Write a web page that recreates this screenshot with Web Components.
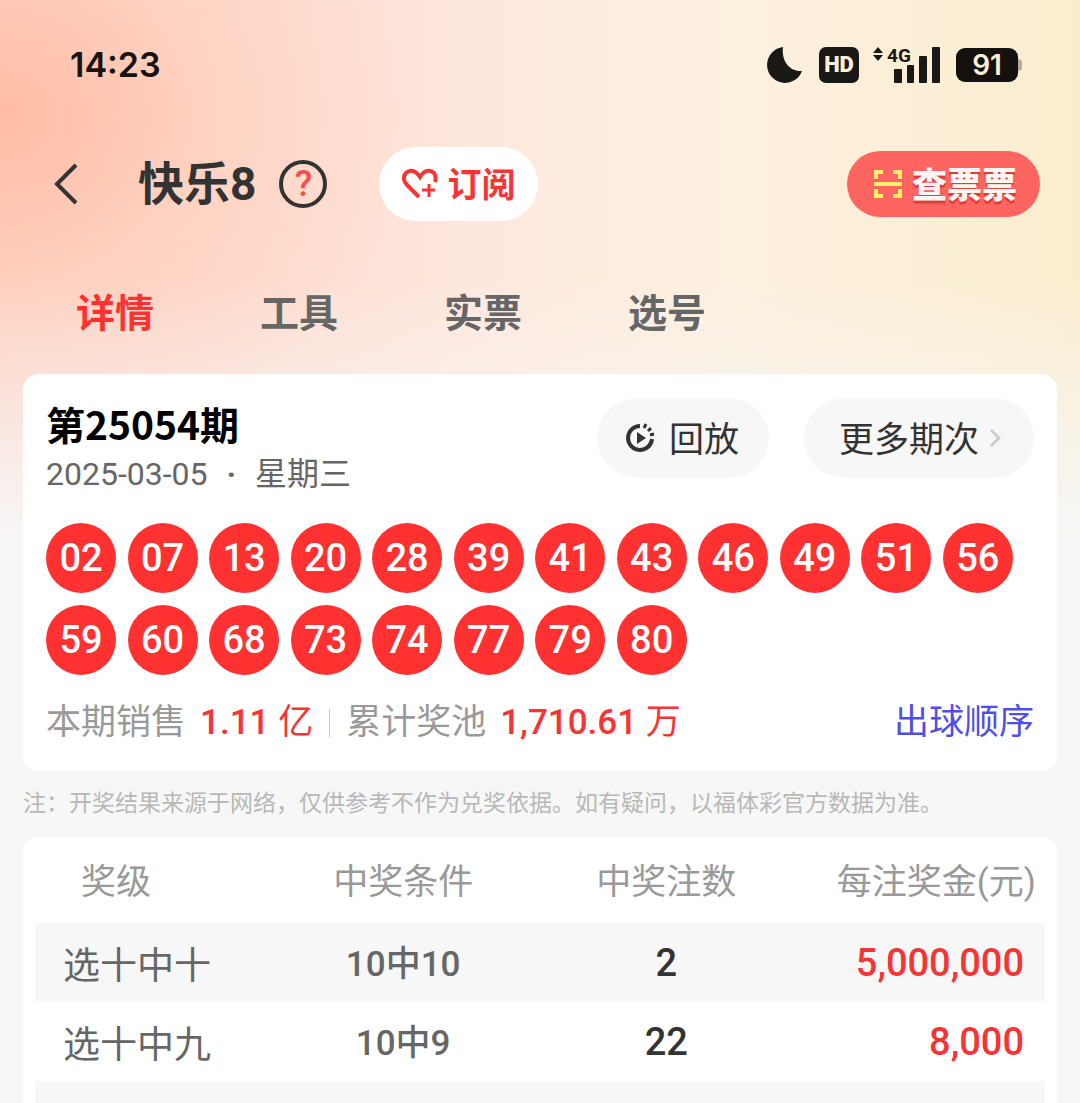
<!DOCTYPE html>
<html lang="zh-CN">
<head>
<meta charset="utf-8">
<meta name="viewport" content="width=device-width, initial-scale=1">
<title>快乐8</title>
<style>
    body {
        margin: 0;
        font-family: Roboto, "Noto Sans CJK SC", sans-serif;
        color: #333;
    }
</style>
</head>
<body>
<lottery-app></lottery-app>

<script>
class BaseElement extends HTMLElement {
    constructor() {
        super();
        this.attachShadow({ mode: 'open' });
        this.shadowRoot.innerHTML = this.render();
    }
}

class StatusBar extends BaseElement {
    render() {
        return `
            <style>
                :host {
                    display: flex;
                    justify-content: space-between;
                    align-items: center;
                    height: 130px;
                    padding: 0 58px 0 70px;
                    color: #17130f;
                }

                time {
                    font: 600 34px/40px Inter, sans-serif;
                }

                .icons {
                    display: flex;
                    align-items: center;
                }

                svg {
                    display: block;
                }

                .hd {
                    width: 40px;
                    margin: 0 13px 0 17px;
                    border-radius: 7px;
                    background: #1a1815;
                    color: #fdf0da;
                    font: 900 22px/36px Roboto, sans-serif;
                    text-align: center;
                }

                .battery {
                    width: 62px;
                    margin-left: 16px;
                    border-radius: 9px;
                    background: #14110e;
                    color: #fbefd6;
                    font: 600 28px/34px Inter, sans-serif;
                    text-align: center;
                }

                .nub {
                    width: 4px;
                    height: 12px;
                    border-radius: 0 4px 4px 0;
                    background: #b3aa9b;
                }
            </style>
            <time>14:23</time>
            <div class="icons">
                <svg width="35" height="36" viewBox="0 0 35 36" aria-hidden="true">
                    <path fill="#1a1815" d="M16 0A18 18 0 1 0 35 24C26 25 14 18 16 0z"/>
                </svg>
                <span class="hd">HD</span>
                <svg width="68" height="52" viewBox="0 -8 68 52" aria-hidden="true">
                    <g fill="#1a1815">
                        <path d="M6 0l5 6H1zM6 14l5-6H1z"/>
                        <text x="15" y="15" font-family="Roboto, sans-serif" font-weight="700" font-size="19">4G</text>
                        <rect x="22" y="22" width="8" height="14" rx="1"/>
                        <rect x="35" y="18" width="7" height="18" rx="1"/>
                        <rect x="47" y="9" width="8" height="27" rx="1"/>
                        <rect x="60" y="0" width="8" height="36" rx="1"/>
                    </g>
                </svg>
                <span class="battery">91</span>
                <i class="nub"></i>
            </div>
        `;
    }
}

class NavBar extends BaseElement {
    render() {
        return `
            <style>
                :host {
                    display: flex;
                    align-items: center;
                    height: 108px;
                    padding: 0 40px 0 54px;
                }

                button {
                    display: flex;
                    align-items: center;
                    justify-content: center;
                    padding: 0;
                    border: none;
                    background: none;
                    font-family: inherit;
                    cursor: pointer;
                }

                button span {
                    padding-bottom: 3px;
                }

                svg {
                    display: block;
                }

                h1 {
                    margin: 0 23px 0 60px;
                    font-size: 46px;
                    font-weight: 700;
                    line-height: 56px;
                }

                .help {
                    box-sizing: border-box;
                    width: 48px;
                    height: 48px;
                    border: 4px solid #333;
                    border-radius: 50%;
                    color: #f55050;
                    font-size: 36px;
                    font-weight: 500;
                    line-height: 40px;
                }

                .subscribe {
                    gap: 9px;
                    height: 74px;
                    margin: 0 auto 0 52px;
                    padding: 0 23px;
                    border-radius: 37px;
                    background: #fff;
                    color: #f93434;
                    font-size: 34px;
                    font-weight: 700;
                }

                .check {
                    gap: 10px;
                    height: 66px;
                    padding: 0 23px 0 27px;
                    border-radius: 33px;
                    background: #ff6560;
                    color: #fff5f3;
                    font-size: 35px;
                    font-weight: 900;
                    text-shadow: 0 3px 1px #dd3c38;
                }
            </style>
            <button aria-label="返回">
                <svg width="24" height="42" viewBox="0 0 24 42"><path d="M22 2L3 21l19 19" fill="none" stroke="#333" stroke-width="4"/></svg>
            </button>
            <h1>快乐8</h1>
            <button class="help">?</button>
            <button class="subscribe">
                <svg width="36" height="32" viewBox="0 0 36 32" fill="none" stroke="#f93434" stroke-width="4">
                    <path d="M17 29L5 17C1 13 1 8 4 5C8 1 13 2 18 9C22 2 28 1 32 5C34 8 34 11 33 14"/>
                    <path d="M27 16v13M20 22h13" stroke-width="3"/>
                </svg>
                <span>订阅</span>
            </button>
            <button class="check">
                <svg width="28" height="28" viewBox="0 0 28 28" fill="none" stroke="#ffef6b" stroke-width="4">
                    <path d="M2 9V2h7M19 2h7v7M26 19v7h-7M9 26H2v-7M0 14h28"/>
                </svg>
                <span>查票票</span>
            </button>
        `;
    }
}

class TabStrip extends BaseElement {
    render() {
        return `
            <style>
                :host {
                    display: block;
                }

                nav {
                    display: flex;
                    gap: 106px;
                    padding: 49px 76px 33px;
                }

                a {
                    color: #666;
                    font-size: 39px;
                    font-weight: 700;
                    line-height: 54px;
                    text-decoration: none;
                }

                a[aria-current] {
                    color: #ff3131;
                }
            </style>
            <nav>
                <a href="#detail" aria-current="page">详情</a>
                <a href="#tools">工具</a>
                <a href="#tickets">实票</a>
                <a href="#pick">选号</a>
            </nav>
        `;
    }
}

class PillButton extends BaseElement {
    render() {
        return `
            <style>
                :host {
                    display: block;
                }

                button {
                    display: flex;
                    align-items: center;
                    gap: var(--pill-gap, 10px);
                    height: 80px;
                    padding: 0 var(--pill-right, 30px) 0 var(--pill-left, 30px);
                    border: none;
                    border-radius: 40px;
                    background: #f7f7f7;
                    color: #333;
                    font-family: inherit;
                    font-size: 35px;
                    cursor: pointer;
                }

                ::slotted(span) {
                    padding-bottom: 3px;
                }
            </style>
            <button><slot></slot></button>
        `;
    }
}

class NumberBall extends BaseElement {
    render() {
        return `
            <style>
                :host {
                    display: block;
                    height: 70px;
                    border-radius: 50%;
                    background: #ff3131;
                    color: #fff;
                    font-size: 38px;
                    font-weight: 500;
                    line-height: 70px;
                    text-align: center;
                }
            </style>
            <slot></slot>
        `;
    }
}

class DrawCard extends BaseElement {
    render() {
        const numbers = ['02', '07', '13', '20', '28', '39', '41', '43', '46', '49',
            '51', '56', '59', '60', '68', '73', '74', '77', '79', '80'];
        return `
            <style>
                :host {
                    display: block;
                    padding: 24px 23px;
                    border-radius: 16px;
                    background: #fff;
                }

                header {
                    display: flex;
                    gap: 35px;
                    margin-bottom: 29px;
                }

                .issue {
                    flex: 1;
                }

                h2 {
                    margin: 0 0 6px;
                    color: #000;
                    font: 700 39px/50px "Noto Sans CJK SC", sans-serif;
                }

                .date {
                    color: #666;
                    font-size: 32px;
                    line-height: 40px;
                }

                .date i {
                    margin: 0 11px;
                    font-style: normal;
                    font-weight: 700;
                }

                .replay {
                    --pill-gap: 14px;
                    --pill-left: 29px;
                }

                .more {
                    --pill-left: 35px;
                    --pill-right: 33px;
                }

                svg {
                    display: block;
                }

                .balls {
                    display: grid;
                    grid-template-columns: repeat(auto-fill, 70px);
                    justify-content: space-between;
                    gap: 12px 11px;
                    margin-right: 21px;
                }

                footer {
                    display: flex;
                    align-items: center;
                    margin-top: 24px;
                    color: #999;
                    font-size: 35px;
                    line-height: 48px;
                }

                strong {
                    margin-left: 14px;
                    color: #f53535;
                    font-weight: 500;
                }

                strong span {
                    font-weight: 400;
                }

                .line {
                    width: 1px;
                    height: 29px;
                    margin: 0 16px;
                    background: #ccc;
                }

                a {
                    margin-left: auto;
                    color: #4f4fe8;
                    text-decoration: none;
                }
            </style>
            <header>
                <div class="issue">
                    <h2>第25054期</h2>
                    <div class="date">2025-03-05 <i>·</i> 星期三</div>
                </div>
                <pill-button class="replay">
                    <svg width="29" height="30" viewBox="0 0 29 30" fill="none" stroke="#333" stroke-width="4">
                        <path d="M14 3A12 12 0 1 0 26 16"/>
                        <path d="M18 5l2-4M22 8l3-3M24 12l4-1" stroke-width="3"/>
                        <path d="M11 9l9 6-9 6z" fill="#333" stroke="none"/>
                    </svg>
                    <span>回放</span>
                </pill-button>
                <pill-button class="more">
                    <span>更多期次</span>
                    <svg width="12" height="18" viewBox="0 0 12 18" fill="none" stroke="#ccc" stroke-width="3"><path d="M2 1l8 8-8 8"/></svg>
                </pill-button>
            </header>
            <div class="balls">
                ${numbers.map(n => `<number-ball>${n}</number-ball>`).join('')}
            </div>
            <footer>
                本期销售<strong>1.11 <span>亿</span></strong>
                <i class="line"></i>
                累计奖池<strong>1,710.61 <span>万</span></strong>
                <a href="#order">出球顺序</a>
            </footer>
        `;
    }
}

class PrizeTable extends BaseElement {
    render() {
        const rows = [
            ['选十中十', '10中10', '2', '5,000,000'],
            ['选十中九', '10中9', '22', '8,000'],
            ['选十中八', '10中8', '', '']
        ];
        return `
            <style>
                :host {
                    display: block;
                    padding: 0 12px 12px;
                    border-radius: 16px;
                    background: #fff;
                }

                table {
                    width: 100%;
                    border-collapse: collapse;
                    table-layout: fixed;
                }

                th, td {
                    padding: 0;
                    white-space: nowrap;
                    text-align: center;
                }

                th {
                    box-sizing: border-box;
                    height: 86px;
                    padding-bottom: 3px;
                    color: #999;
                    font-size: 35px;
                    font-weight: 400;
                }

                th:first-child {
                    padding-left: 46px;
                    text-align: left;
                }

                th:last-child {
                    padding-right: 9px;
                    text-align: right;
                }

                td {
                    box-sizing: border-box;
                    height: 79px;
                    color: #333;
                    font-size: 38px;
                    font-weight: 500;
                }

                tbody tr:nth-child(odd) {
                    background: #f7f7f7;
                }

                .level {
                    padding-left: 28px;
                    color: #666;
                    font-size: 37px;
                    font-weight: 400;
                    text-align: left;
                }

                .rule {
                    padding-bottom: 5px;
                    color: #666;
                    font-size: 35px;
                }

                .money {
                    padding-right: 21px;
                    color: #f53535;
                    text-align: right;
                }
            </style>
            <table>
                <colgroup>
                    <col style="width: 23.4%">
                    <col style="width: 26.1%">
                    <col style="width: 26%">
                    <col>
                </colgroup>
                <thead>
                    <tr><th>奖级</th><th>中奖条件</th><th>中奖注数</th><th>每注奖金(元)</th></tr>
                </thead>
                <tbody>
                    ${rows.map(([level, rule, count, money]) => `
                        <tr>
                            <td class="level">${level}</td>
                            <td class="rule">${rule}</td>
                            <td>${count}</td>
                            <td class="money">${money}</td>
                        </tr>
                    `).join('')}
                </tbody>
            </table>
        `;
    }
}

class LotteryApp extends BaseElement {
    render() {
        return `
            <style>
                :host {
                    display: block;
                    height: 100vh;
                    overflow-y: auto;
                    scrollbar-width: none;
                    background:
                        linear-gradient(rgba(247, 247, 247, 0) 280px, #f7f7f7 540px),
                        radial-gradient(ellipse 420px 340px at 0 115px, #ffbca4, rgba(255, 205, 186, 0.6) 50%, rgba(255, 214, 200, 0)),
                        linear-gradient(90deg, #fed3c5, #fee8de 45%, #fcf0df 68%, #faedcf);
                }

                main {
                    padding: 0 23px;
                }

                p {
                    margin: 0;
                    color: #b8b8b8;
                    font-size: 23px;
                    line-height: 66px;
                }
            </style>
            <status-bar></status-bar>
            <nav-bar></nav-bar>
            <tab-strip></tab-strip>
            <main>
                <draw-card></draw-card>
                <p>注：开奖结果来源于网络，仅供参考不作为兑奖依据。如有疑问，以福体彩官方数据为准。</p>
                <prize-table></prize-table>
            </main>
        `;
    }
}

customElements.define('status-bar', StatusBar);
customElements.define('nav-bar', NavBar);
customElements.define('tab-strip', TabStrip);
customElements.define('pill-button', PillButton);
customElements.define('number-ball', NumberBall);
customElements.define('draw-card', DrawCard);
customElements.define('prize-table', PrizeTable);
customElements.define('lottery-app', LotteryApp);
</script>
</body>
</html>
